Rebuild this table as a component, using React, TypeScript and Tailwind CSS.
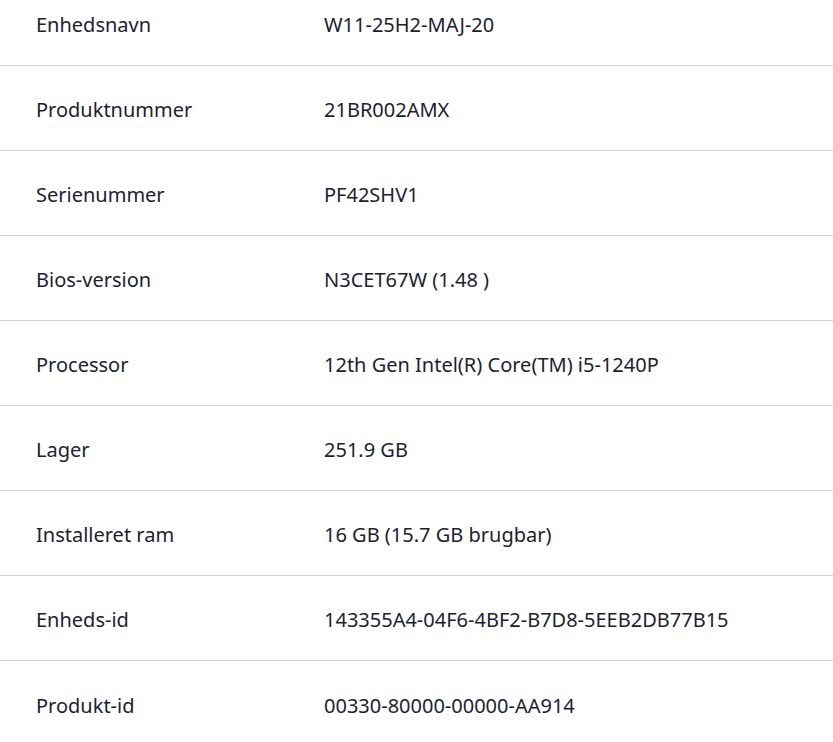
import React from "react";

const rows: [string, string][] = [
  ["Enhedsnavn", "W11-25H2-MAJ-20"],
  ["Produktnummer", "21BR002AMX"],
  ["Serienummer", "PF42SHV1"],
  ["Bios-version", "N3CET67W (1.48 )"],
  ["Processor", "12th Gen Intel(R) Core(TM) i5-1240P"],
  ["Lager", "251.9 GB"],
  ["Installeret ram", "16 GB (15.7 GB brugbar)"],
  ["Enheds-id", "143355A4-04F6-4BF2-B7D8-5EEB2DB77B15"],
  ["Produkt-id", "00330-80000-00000-AA914"],
];

export default function App() {
  return (
    <div
      className="w-[833px] h-[742px] overflow-hidden bg-white text-[#1c2230]"
      style={{ fontFamily: '"Noto Sans", "Open Sans", sans-serif' }}
    >
      <div className="mt-[-19px]">
        {rows.map(([k, v], i) => (
          <div
            key={k}
            className={
              "flex items-center h-[85px] text-[20px] pt-[4px] " +
              (i < rows.length - 1 ? "border-b border-[#cfd5db]" : "")
            }
          >
            <div className="w-[324px] pl-[36px] shrink-0">{k}</div>
            <div>{v}</div>
          </div>
        ))}
      </div>
    </div>
  );
}
